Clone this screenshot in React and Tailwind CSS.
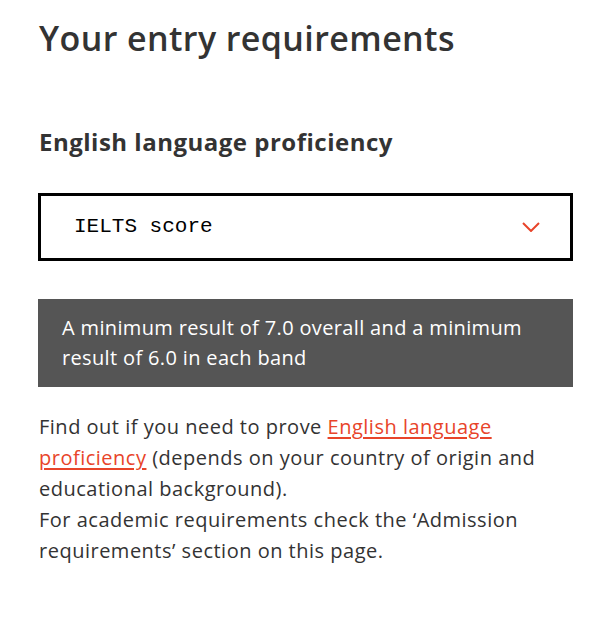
export default function App() {
  return (
    <div className="min-h-[634px] bg-white pl-[39px] pr-[21px] pt-[14px] text-[#333] font-['Open_Sans',sans-serif]">
      <h1 className="text-[34px] leading-[48px] font-semibold tracking-[0.4px]">Your entry requirements</h1>

      <h2 className="mt-[63px] text-[24px] leading-[34px] font-bold tracking-[0.5px]">English language proficiency</h2>

      <div className="mt-[34px] -ml-px flex h-[68px] items-center justify-between border-[3px] border-black pl-[33px] pr-[30px]">
        <span className="font-['Liberation_Mono',monospace] text-[21px] text-black">IELTS score</span>
        <svg width="18" height="10" viewBox="0 0 18 10" fill="none">
          <path d="M1 1l8 8 8-8" stroke="#e8442a" strokeWidth="2" />
        </svg>
      </div>

      <div className="mt-[38px] -ml-px bg-[#555] px-[24px] py-[14px] text-[20px] leading-[30px] tracking-[0.35px] text-white">
        A minimum result of 7.0 overall and a minimum result of 6.0 in each band
      </div>

      <p className="mt-[24px] text-[20px] leading-[31px] tracking-[0.5px]">
        Find out if you need to prove{' '}
        <a href="#" className="text-[#e8442a] underline underline-offset-[3px]">English language proficiency</a>{' '}
        (depends on your country of origin and educational background).
        <br />
        For academic requirements check the ‘Admission requirements’ section on this page.
      </p>
    </div>
  );
}
